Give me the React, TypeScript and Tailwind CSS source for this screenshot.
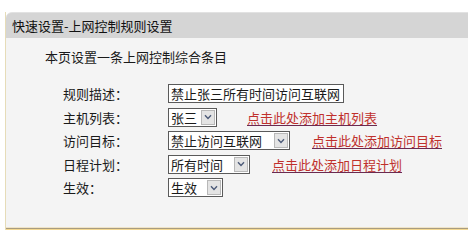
import React from "react";

const font = { fontFamily: '"Noto Sans CJK SC", "Noto Sans", sans-serif' };

function Chevron() {
  return (
    <svg width="8" height="6" viewBox="0 0 8 6" className="block">
      <path d="M1 1.2 L4 4.4 L7 1.2" fill="none" stroke="#4c5a78" strokeWidth="1.4" />
    </svg>
  );
}

function Select({ text, w }: { text: string; w: string }) {
  return (
    <div className={`flex h-[19px] items-center border border-[#5a5a5a] bg-white ${w}`}>
      <span className="flex-1 overflow-hidden whitespace-nowrap pl-[2px] text-[13px] leading-[17px] text-[#1a1a1a]">
        {text}
      </span>
      <span className="mr-[1px] flex h-[15px] w-[14px] items-center justify-center border border-[#b8b8b8] bg-[#e4e4e4]">
        <Chevron />
      </span>
    </div>
  );
}

function Link({ text, ml }: { text: string; ml: string }) {
  return (
    <span className={`${ml} whitespace-nowrap text-[13px] leading-[17px] text-[#c0302c] underline decoration-[#6a2a50] underline-offset-[2px]`}>
      {text}
    </span>
  );
}

function Row({ label, children }: { label: string; children: React.ReactNode }) {
  return (
    <div className="flex h-[23.5px] items-center">
      <span className="w-[105px] shrink-0 text-[13px] leading-[17px] text-[#1a1a1a]">{label}</span>
      {children}
    </div>
  );
}

export default function App() {
  return (
    <div className="h-[230px] w-[468px] overflow-hidden bg-white pt-[12px]" style={font}>
      <div className="ml-[5px] flex h-[218px] flex-col border-l border-[#e6dcb8]">
        <div className="flex h-[26px] items-center rounded-tl-[6px] border-t border-[#e2e2e2] bg-[#d5d5d5] pl-[6px] text-[13px] text-[#111]">
          快速设置-上网控制规则设置
        </div>
        <div className="flex-1 bg-[#f4f4f4] pt-[12px]">
          <div className="ml-[39px] text-[13px] leading-[14px] text-[#1a1a1a]">本页设置一条上网控制综合条目</div>
          <div className="mt-[18px] pl-[57px]">
            <Row label="规则描述：">
              <div className="h-[19px] w-[176px] overflow-hidden whitespace-nowrap border border-[#5a5a5a] bg-white pl-[2px] text-[13px] leading-[17px] text-[#1a1a1a]">
                禁止张三所有时间访问互联网
              </div>
            </Row>
            <Row label="主机列表：">
              <Select text="张三" w="w-[49px]" />
              <Link text="点击此处添加主机列表" ml="ml-[30px]" />
            </Row>
            <Row label="访问目标：">
              <Select text="禁止访问互联网" w="w-[122px]" />
              <Link text="点击此处添加访问目标" ml="ml-[22px]" />
            </Row>
            <Row label="日程计划：">
              <Select text="所有时间" w="w-[82px]" />
              <Link text="点击此处添加日程计划" ml="ml-[22px]" />
            </Row>
            <Row label="生效：">
              <Select text="生效" w="w-[55px]" />
            </Row>
          </div>
        </div>
        <div className="h-[1px] bg-[#f0e4c8]" />
        <div className="h-[1px] bg-[#a89c80]" />
        <div className="h-[1px] bg-[#f4d890]" />
      </div>
    </div>
  );
}
